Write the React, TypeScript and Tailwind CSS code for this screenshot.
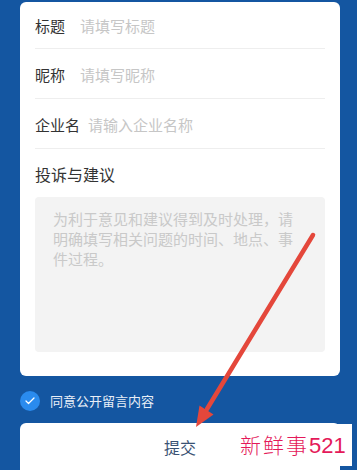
import { Check } from 'lucide-react'

// ─── Constants ───────────────────────────────────────────────────────────────

const FONT = { fontFamily: '"Noto Sans CJK SC", "Noto Sans", sans-serif' }

const FIELDS = [
  { label: '标题', placeholder: '请填写标题', gap: 'ml-[15px]' },
  { label: '昵称', placeholder: '请填写昵称', gap: 'ml-[15px]' },
  { label: '企业名', placeholder: '请输入企业名称', gap: 'ml-2' },
]

// ─── Component ───────────────────────────────────────────────────────────────

function FieldRow({ label, placeholder, gap }: { label: string; placeholder: string; gap: string }) {
  return (
    <div className="flex h-[50px] items-center border-b border-[#eeeeee] pt-[3px] first:h-[47px]">
      <span className="text-[15px] text-[#333333]">{label}</span>
      <span className={`${gap} text-[15px] text-[#c6c6c6]`}>{placeholder}</span>
    </div>
  )
}

export default function App() {
  return (
    <div className="relative h-[470px] w-[357px] overflow-hidden bg-[#1456a1]" style={FONT}>
      {/* Form card */}
      <div className="ml-5 mr-[17px] mt-[2px] rounded-md bg-white px-[15px] pb-6">
        {FIELDS.map((f) => (
          <FieldRow key={f.label} {...f} />
        ))}
        <div className="flex h-[48px] items-center pt-[2px] text-[16px] text-[#333333]">投诉与建议</div>
        <div className="h-[155px] rounded bg-[#f3f3f3] pl-[18px] pr-[28px] pt-3 text-[15px] leading-[20px] text-[#c9c9c9]">
          为利于意见和建议得到及时处理，请明确填写相关问题的时间、地点、事件过程。
        </div>
      </div>

      {/* Agreement */}
      <div className="mt-[15px] flex items-center pl-5">
        <div className="flex h-5 w-5 items-center justify-center rounded-full bg-[#2a8bee]">
          <Check className="h-3 w-3 text-white" strokeWidth={2.5} />
        </div>
        <span className="ml-[10px] text-[13px] text-[#e8eef7]">同意公开留言内容</span>
      </div>

      {/* Submit */}
      <div className="ml-5 mr-[17px] mt-3 flex h-[50px] justify-center rounded-t-md bg-white pt-[12px]">
        <span className="text-[16px] text-[#3a5273]">提交</span>
      </div>

      {/* Watermark */}
      <div className="absolute left-[236px] top-[424px] flex h-[42px] w-[116px] items-center bg-white pl-[4px]">
        <span className="text-[21px] font-light tracking-[2px] text-[#e4195a]">新鲜事</span>
        <span className="text-[22px] text-[#e4195a]" style={{ fontFamily: '"Liberation Sans", sans-serif' }}>
          521
        </span>
      </div>

      {/* Annotation arrow */}
      <svg className="pointer-events-none absolute left-0 top-0" width="357" height="470" viewBox="0 0 357 470">
        <line x1="313" y1="235" x2="207" y2="409" stroke="#e4473b" strokeWidth="4.5" strokeLinecap="round" />
        <polygon points="196,427 213.5,414.5 199.5,405.5" fill="#e4473b" />
      </svg>
    </div>
  )
}
